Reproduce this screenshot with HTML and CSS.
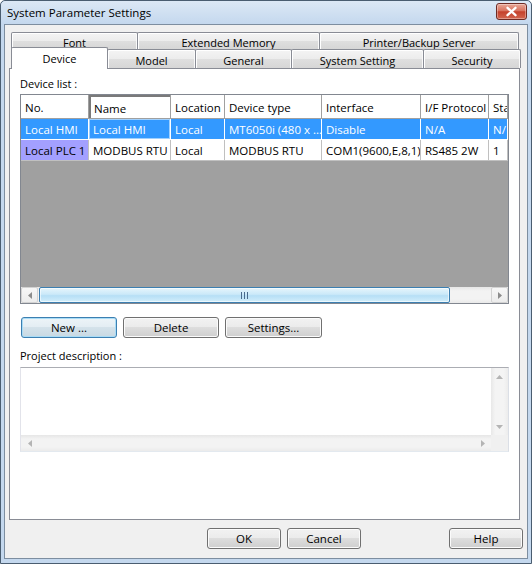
FILE: index.html
```html
<!DOCTYPE html>
<html>
<head>
<meta charset="utf-8">
<title>System Parameter Settings</title>
<link rel="stylesheet" href="styles.css">
</head>
<body>
<div class="window">
  <div class="titlebar">
    <span class="title">System Parameter Settings</span>
    <div class="close">
      <svg width="13" height="11" viewBox="0 0 13 11"><path d="M2.5 1.8 L10.5 9.2 M10.5 1.8 L2.5 9.2" stroke="#fff" stroke-width="2.3" stroke-linecap="round"/></svg>
    </div>
  </div>
  <div class="body">
    <div class="tabs">
      <div class="tabrow row1">
        <div class="tab w-font">Font</div>
        <div class="tab w-ext">Extended Memory</div>
        <div class="tab w-prn">Printer/Backup Server</div>
      </div>
      <div class="tabrow row2">
        <div class="tab selected w-dev">Device</div>
        <div class="tab w-model">Model</div>
        <div class="tab w-gen">General</div>
        <div class="tab w-sys">System Setting</div>
        <div class="tab w-sec">Security</div>
      </div>
    </div>
    <div class="panel">
      <div class="label">Device list :</div>
      <div class="listview">
        <div class="grid">
          <div class="hcell">No.</div>
          <div class="hcell focus">Name</div>
          <div class="hcell">Location</div>
          <div class="hcell">Device type</div>
          <div class="hcell">Interface</div>
          <div class="hcell">I/F Protocol</div>
          <div class="hcell">Sta</div>

          <div class="cell sel">Local HMI</div>
          <div class="cell sel focuscell">Local HMI</div>
          <div class="cell sel">Local</div>
          <div class="cell sel">MT6050i (480 x ...</div>
          <div class="cell sel">Disable</div>
          <div class="cell sel">N/A</div>
          <div class="cell sel">N/</div>

          <div class="cell fixed">Local PLC 1</div>
          <div class="cell">MODBUS RTU</div>
          <div class="cell">Local</div>
          <div class="cell">MODBUS RTU</div>
          <div class="cell">COM1(9600,E,8,1)</div>
          <div class="cell">RS485 2W</div>
          <div class="cell">1</div>
        </div>
        <div class="fill"></div>
        <div class="hscroll">
          <div class="sbtn"><svg width="4" height="7" viewBox="0 0 4 7"><polygon points="4,0 0,3.5 4,7" fill="#8c8c8c"/></svg></div>
          <div class="thumb"><svg width="7" height="7" viewBox="0 0 7 7"><path d="M0.5 0 V7 M3.5 0 V7 M6.5 0 V7" stroke="#4a6a8c" stroke-width="1"/></svg></div>
          <div class="track"></div>
          <div class="sbtn"><svg width="4" height="7" viewBox="0 0 4 7"><polygon points="0,0 4,3.5 0,7" fill="#8c8c8c"/></svg></div>
        </div>
      </div>
      <div class="btnrow">
        <div class="btn default w-new">New ...</div>
        <div class="btn w-del">Delete</div>
        <div class="btn w-set">Settings...</div>
      </div>
      <div class="label label2">Project description :</div>
      <div class="textbox">
        <div class="tb-top">
          <div class="tb-area"></div>
          <div class="vscroll">
            <div class="vbtn"><svg width="7" height="4" viewBox="0 0 7 4"><polygon points="0,4 3.5,0 7,4" fill="#b4b4b4"/></svg></div>
            <div class="vtrack"></div>
            <div class="vbtn"><svg width="7" height="4" viewBox="0 0 7 4"><polygon points="0,0 3.5,4 7,0" fill="#b4b4b4"/></svg></div>
          </div>
        </div>
        <div class="tb-bottom">
          <div class="hscroll2">
            <div class="hbtn"><svg width="4" height="7" viewBox="0 0 4 7"><polygon points="4,0 0,3.5 4,7" fill="#b4b4b4"/></svg></div>
            <div class="htrack"></div>
            <div class="hbtn"><svg width="4" height="7" viewBox="0 0 4 7"><polygon points="0,0 4,3.5 0,7" fill="#b4b4b4"/></svg></div>
          </div>
          <div class="corner"></div>
        </div>
      </div>
    </div>
    <div class="footer">
      <div class="btn w-foot">OK</div>
      <div class="btn w-foot">Cancel</div>
      <div class="spacer"></div>
      <div class="btn w-foot">Help</div>
    </div>
  </div>
</div>
</body>
</html>
```

FILE: styles.css
```css
* { box-sizing: border-box; }
html, body { margin: 0; padding: 0; }
body {
  width: 532px;
  height: 564px;
  overflow: hidden;
  background: #ffffff;
  font-family: "Open Sans", "Noto Sans", sans-serif;
  font-size: 11px;
  color: #000;
}

.window {
  width: 532px;
  height: 564px;
  border: 1px solid #4a5d70;
  border-radius: 5px 5px 0 0;
  background: #c4d8ee;
  display: flex;
  flex-direction: column;
}

.titlebar {
  height: 23px;
  display: flex;
  align-items: flex-start;
  padding: 0 4px 0 6px;
  background: linear-gradient(#dce8f5, #c4d8ee);
  border-radius: 5px 5px 0 0;
}
.title {
  flex: 1;
  font-size: 11.5px;
  line-height: 14px;
  margin-top: 5px;
}
.close {
  width: 31px;
  height: 17px;
  margin-top: 2px;
  border: 1px solid #6e2b24;
  border-radius: 3px;
  background: linear-gradient(#e9a898 0%, #d8735f 45%, #c4412c 52%, #d2664f 100%);
  box-shadow: inset 0 0 0 1px rgba(255,255,255,0.35);
  display: flex;
  align-items: center;
  justify-content: center;
}

.body {
  flex: 1;
  margin: 0 3px 4px 3px;
  border: 1px solid #7d8ea0;
  background: #f0f0f0;
  display: flex;
  flex-direction: column;
}

/* tabs */
.tabs { padding: 7px 0 0 4px; }
.tabrow { display: flex; padding-left: 2px; }
.row1 { height: 17px; }
.row2 { height: 19px; align-items: flex-start; }
.tab {
  height: 100%;
  border: 1px solid #898c95;
  border-bottom: none;
  border-radius: 2px 2px 0 0;
  margin-left: -1px;
  padding-top: 2px;
  background: linear-gradient(#f4f4f4, #ececec 50%, #dfdfdf 50%, #d6d6d6);
  box-shadow: inset 1px 1px 0 #ffffff, inset -1px 0 0 #fafafa;
  display: flex;
  align-items: center;
  justify-content: center;
  white-space: nowrap;
}
.tabrow .tab:first-child { margin-left: 0; }
.tab.selected {
  position: relative;
  z-index: 2;
  margin-left: -2px;
  margin-top: -2px;
  height: 22px;
  padding-top: 0;
  padding-bottom: 1px;
  background: #ffffff;
  box-shadow: none;
}
.w-font { width: 127px; }
.w-ext { width: 183px; }
.w-prn { width: 200px; }
.w-dev { width: 97px; }
.w-model { width: 89px; }
.w-gen { width: 97px; }
.w-sys { width: 133px; }
.w-sec { width: 98px; }

/* panel */
.panel {
  margin-left: 4px;
  width: 511px;
  height: 452px;
  border: 1px solid #898c95;
  background: #ffffff;
  display: flex;
  flex-direction: column;
  padding: 8px 0 0 10px;
}
.label {
  height: 14px;
  line-height: 14px;
  white-space: nowrap;
}
.label2 { margin-top: 11px; }

/* list view */
.listview {
  margin-top: 3px;
  width: 489px;
  height: 210px;
  border: 1px solid #828790;
  display: flex;
  flex-direction: column;
  overflow: hidden;
}
.grid {
  display: grid;
  grid-template-columns: 68px 82px 54px 97px 99px 68px 1fr;
  grid-template-rows: 24px 21px 21px;
  overflow: hidden;
}
.hcell {
  background: #ffffff;
  border-right: 1px solid #a0a0a0;
  border-bottom: 1px solid #a0a0a0;
  padding: 1px 0 0 4px;
  display: flex;
  align-items: center;
  white-space: nowrap;
  overflow: hidden;
  font-size: 11.5px;
}
.hcell.focus {
  box-shadow: inset 2px 2px 0 #7a7a7a;
  padding-top: 3px;
  padding-left: 5px;
}
.cell {
  background: #ffffff;
  border-right: 1px solid #c0c0c0;
  border-bottom: 1px solid #c0c0c0;
  padding: 0 0 0 4px;
  display: flex;
  align-items: center;
  white-space: nowrap;
  overflow: hidden;
  font-size: 11.5px;
}
.cell.sel {
  background: #3399ff;
  color: #ffffff;
  border-right-color: #ffffff;
  border-bottom-color: #ffffff;
}
.cell.focuscell {
  box-shadow: inset 0 0 0 1px #9fd0ff;
}
.cell.fixed {
  background: #a3a0ff;
}
.fill {
  height: 126px;
  background: #a0a0a0;
}
.hscroll {
  height: 16px;
  display: flex;
  background: linear-gradient(#e6e6e6, #f3f3f3 25%, #f3f3f3 75%, #e9e9e9);
}
.sbtn {
  width: 17px;
  height: 16px;
  border: 1px solid #d2d2d2;
  border-radius: 2px;
  background: linear-gradient(#f7f7f7, #ececec);
  display: flex;
  align-items: center;
  justify-content: center;
}
.thumb {
  width: 411px;
  height: 16px;
  margin-left: 1px;
  border: 1px solid #3c7fb1;
  border-radius: 2px;
  background: linear-gradient(#e6f5fc 0%, #cbe9f9 45%, #b6dff6 55%, #d2eefb 100%);
  box-shadow: inset 0 0 0 1px rgba(255,255,255,0.6);
  display: flex;
  align-items: center;
  justify-content: center;
}
.track { flex: 1; }

/* buttons */
.btnrow {
  display: flex;
  gap: 6px;
  margin-top: 13px;
  margin-left: 1px;
}
.btn {
  height: 21px;
  border: 1px solid #707070;
  border-radius: 3px;
  background: linear-gradient(#f2f2f2 0%, #ebebeb 49%, #dddddd 50%, #cfcfcf 100%);
  box-shadow: inset 0 0 0 1px #fbfbfb;
  display: flex;
  align-items: center;
  justify-content: center;
  white-space: nowrap;
  font-size: 11.5px;
}
.btn.default {
  border-color: #3c7fb1;
  background: linear-gradient(#edf4f8 0%, #e3edf3 49%, #d4e2ea 50%, #c8d9e3 100%);
  box-shadow: inset 0 0 0 1px #a9dcf6;
}
.w-new { width: 96px; }
.w-del { width: 96px; }
.w-set { width: 97px; }
.w-foot { width: 74px; }

/* description box */
.textbox {
  margin-top: 4px;
  width: 489px;
  height: 85px;
  border: 1px solid;
  border-color: #abadb3 #dbdfe6 #e3e9ef #e2e3ea;
  display: flex;
  flex-direction: column;
}
.tb-top { flex: 1; display: flex; }
.tb-area { flex: 1; background: #ffffff; }
.vscroll {
  width: 17px;
  display: flex;
  flex-direction: column;
  background: linear-gradient(to right, #e8e8e8, #f4f4f4 25%, #f4f4f4 75%, #ececec);
}
.vbtn {
  height: 17px;
  display: flex;
  align-items: center;
  justify-content: center;
}
.vtrack { flex: 1; }
.tb-bottom { height: 16px; display: flex; }
.hscroll2 {
  flex: 1;
  display: flex;
  background: linear-gradient(#e6e6e6, #f3f3f3 25%, #f3f3f3 75%, #ebebeb);
}
.hbtn {
  width: 17px;
  display: flex;
  align-items: center;
  justify-content: center;
}
.htrack { flex: 1; }
.corner { width: 17px; background: #f0f0f0; }

/* footer */
.footer {
  display: flex;
  gap: 6px;
  padding: 8px 4px 0 202px;
}
.spacer { flex: 1; }
```
